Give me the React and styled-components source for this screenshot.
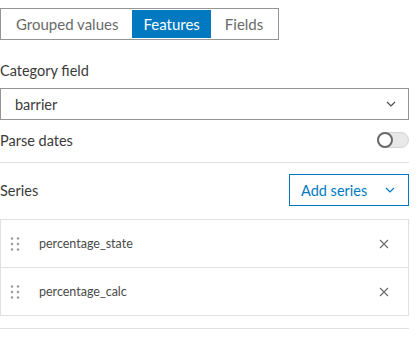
import styled, { createGlobalStyle } from 'styled-components';
import { useState } from 'react';

const GlobalStyle = createGlobalStyle`
  body {
    margin: 0;
    background: #ffffff;
    font-family: Lato, 'Liberation Sans', sans-serif;
    color: #3a3a3a;
  }
`;

const tabs = ['Grouped values', 'Features', 'Fields'];
const series = ['percentage_state', 'percentage_calc'];

const Panel = styled.div`
  width: 409px;
  padding-top: 8px;
`;

const Segmented = styled.div`
  display: inline-flex;
  border: 1px solid #959595;
  padding: 1px;
`;

const Segment = styled.button`
  height: 28px;
  padding: 0 ${(p) => p.$pad}px;
  border: none;
  background: ${(p) => (p.$active ? '#0079c1' : 'transparent')};
  color: ${(p) => (p.$active ? '#ffffff' : '#6a6a6a')};
  font-family: inherit;
  font-size: 15px;
  cursor: pointer;
`;

const Label = styled.div`
  margin-top: 21px;
  font-size: 14.5px;
  line-height: 20px;
`;

const Select = styled.div`
  margin-top: 7px;
  height: 30px;
  border: 1px solid #959595;
  display: flex;
  align-items: center;
  justify-content: space-between;
  padding: 0 12px 0 14px;
  font-size: 14.5px;
`;

const ToggleRow = styled.div`
  height: 40px;
  display: flex;
  align-items: center;
  justify-content: space-between;
  font-size: 14.5px;
`;

const Track = styled.div`
  width: 30px;
  height: 14px;
  border: 1px solid #d4d4d4;
  border-radius: 9px;
  background: #e8e8e8;
  position: relative;
`;

const Knob = styled.div`
  position: absolute;
  left: -1px;
  top: -1px;
  width: 12px;
  height: 12px;
  border: 2px solid #6a6a6a;
  border-radius: 50%;
  background: #ffffff;
`;

const Divider = styled.div`
  height: 1px;
  background: #e0e0e0;
  margin-top: ${(p) => p.$top}px;
`;

const SeriesRow = styled.div`
  margin-top: 11px;
  display: flex;
  align-items: center;
  justify-content: space-between;
  font-size: 14.5px;
`;

const AddButton = styled.button`
  height: 32px;
  width: 120px;
  border: 1px solid #0079c1;
  background: #ffffff;
  color: #0079c1;
  display: flex;
  align-items: center;
  justify-content: space-between;
  padding: 0 13px 0 11px;
  font-family: inherit;
  font-size: 14.5px;
  cursor: pointer;
`;

const List = styled.div`
  margin-top: 13px;
  border: 1px solid #dfdfdf;
`;

const Row = styled.div`
  height: 47px;
  display: flex;
  align-items: center;
  padding: 0 19px 0 7px;
  font-size: 12.5px;
  color: #4a4a4a;
  & + & {
    border-top: 1px solid #dfdfdf;
  }
`;

const RowLabel = styled.span`
  flex: 1;
  margin-left: 15px;
`;

function Chevron({ color }) {
  return (
    <svg width="10" height="6" viewBox="0 0 10 6">
      <path d="M1 1l4 4 4-4" fill="none" stroke={color} strokeWidth="1.2" />
    </svg>
  );
}

function Handle() {
  return (
    <svg width="16" height="16" viewBox="0 0 16 16">
      {[2.5, 8, 13.5].map((y) =>
        [4, 10].map((x) => <circle key={`${x}-${y}`} cx={x} cy={y} r="1.2" fill="#9a9a9a" />)
      )}
    </svg>
  );
}

function Close() {
  return (
    <svg width="10" height="10" viewBox="0 0 10 10">
      <path d="M1 1l8 8M9 1l-8 8" stroke="#6a6a6a" strokeWidth="1.1" />
    </svg>
  );
}

export default function App() {
  const [active, setActive] = useState(1);
  const pads = [14, 11, 14];

  return (
    <Panel>
      <GlobalStyle />
      <Segmented>
        {tabs.map((t, i) => (
          <Segment key={t} $active={active === i} $pad={pads[i]} onClick={() => setActive(i)}>
            {t}
          </Segment>
        ))}
      </Segmented>
      <Label>Category field</Label>
      <Select>
        <span>barrier</span>
        <Chevron color="#4a4a4a" />
      </Select>
      <ToggleRow>
        <span>Parse dates</span>
        <Track>
          <Knob />
        </Track>
      </ToggleRow>
      <Divider $top={2} />
      <SeriesRow>
        <span>Series</span>
        <AddButton>
          <span>Add series</span>
          <Chevron color="#0079c1" />
        </AddButton>
      </SeriesRow>
      <List>
        {series.map((s) => (
          <Row key={s}>
            <Handle />
            <RowLabel>{s}</RowLabel>
            <Close />
          </Row>
        ))}
      </List>
      <Divider $top={12} />
    </Panel>
  );
}
